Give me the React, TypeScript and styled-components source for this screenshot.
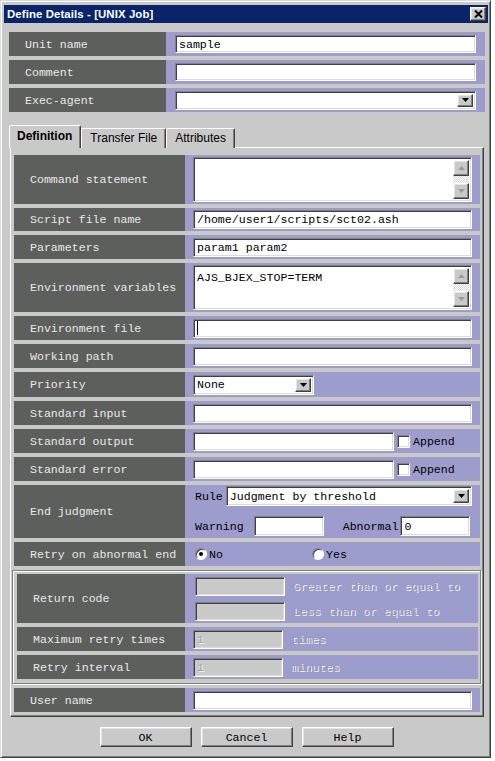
import React from "react";
import styled, { createGlobalStyle, css } from "styled-components";

const GRAY = "#c9c9c9";
const PURPLE = "#9c9ccd";
const LABEL = "#5d5f5c";
const MONO = `"Liberation Mono", "Courier New", monospace`;
const SANS = `"Liberation Sans", Arial, sans-serif`;

const GlobalStyle = createGlobalStyle`
  html, body { margin: 0; padding: 0; background: #ffffff; }
  body { width: 495px; height: 761px; overflow: hidden; }
  *, *::before, *::after { box-sizing: border-box; }
`;

const sunken = css`
  border-style: solid;
  border-width: 1px;
  border-color: #808080 #ffffff #ffffff #808080;
  box-shadow: inset 1px 1px 0 #404040, inset -1px -1px 0 #dcdcdc;
`;

const raised = css`
  border-style: solid;
  border-width: 1px;
  border-color: #ffffff #404040 #404040 #ffffff;
  box-shadow: inset -1px -1px 0 #808080, inset 1px 1px 0 #e4e4e4;
`;

const Window = styled.div`
  width: 491px;
  height: 758px;
  background: ${GRAY};
  border: 1px solid;
  border-color: #dcdcdc #404040 #404040 #dcdcdc;
  box-shadow: inset 1px 1px 0 #ffffff, inset -1px -1px 0 #808080;
  padding: 4px 2px 2px 3px;
  display: flex;
  flex-direction: column;
`;

const TitleBar = styled.div`
  height: 18px;
  background: #0a246a;
  display: flex;
  align-items: center;
  justify-content: space-between;
  padding: 0 2px 0 3px;
`;

const TitleText = styled.span`
  color: #ffffff;
  font: bold 11.4px ${SANS};
  letter-spacing: 0.1px;
`;

const CloseButton = styled.div`
  width: 16px;
  height: 14px;
  background: ${GRAY};
  ${raised};
  display: flex;
  align-items: center;
  justify-content: center;
`;

const TopRows = styled.div`
  display: flex;
  flex-direction: column;
  gap: 4px;
  margin: 9px 3px 0 5px;
`;

const Row = styled.div<{ $label: number; $h: number }>`
  display: grid;
  grid-template-columns: ${(p) => p.$label}px 1fr;
  height: ${(p) => p.$h}px;
`;

const Label = styled.div`
  background: ${LABEL};
  color: #e8e8e8;
  font: 11.6px ${MONO};
  display: flex;
  align-items: center;
  padding-left: 16px;
  white-space: pre;
`;

const Field = styled.div<{ $pad: number }>`
  background: ${PURPLE};
  display: flex;
  align-items: center;
  padding: 0 ${(p) => p.$pad}px;
  min-width: 0;
`;

const FieldStack = styled.div<{ $gap: number; $top: number }>`
  background: ${PURPLE};
  display: flex;
  flex-direction: column;
  gap: ${(p) => p.$gap}px;
  padding: ${(p) => p.$top}px 8px 0 10px;
`;

const Line = styled.div`
  display: flex;
  align-items: center;
`;

const Input = styled.div<{ $h?: number; $w?: number; $disabled?: boolean }>`
  ${sunken};
  height: ${(p) => p.$h ?? 19}px;
  ${(p) => (p.$w ? `width: ${p.$w}px; flex: none;` : "flex: 1;")}
  background: ${(p) => (p.$disabled ? GRAY : "#ffffff")};
  color: ${(p) => (p.$disabled ? "#a4a4a4" : "#000000")};
  ${(p) => (p.$disabled ? "text-shadow: 1px 1px 0 #f4f4f4;" : "")}
  font: 11.6px ${MONO};
  display: flex;
  align-items: center;
  padding-left: 3px;
  white-space: pre;
  overflow: hidden;
`;

const Caret = styled.span`
  width: 1px;
  height: 14px;
  background: #000;
`;

const SelectBox = styled.div<{ $h?: number; $w?: number }>`
  ${sunken};
  height: ${(p) => p.$h ?? 20}px;
  ${(p) => (p.$w ? `width: ${p.$w}px; flex: none;` : "flex: 1;")}
  background: #ffffff;
  display: flex;
  align-items: center;
  padding: 2px;
`;

const SelectText = styled.span`
  flex: 1;
  font: 11.6px ${MONO};
  color: #000;
  padding-left: 1px;
  white-space: pre;
`;

const ArrowButton = styled.div`
  width: 16px;
  height: 100%;
  background: ${GRAY};
  ${raised};
  display: flex;
  align-items: center;
  justify-content: center;
`;

const TextArea = styled.div`
  ${sunken};
  flex: 1;
  height: 45px;
  background: #ffffff;
  display: flex;
  padding: 2px;
`;

const AreaText = styled.div`
  flex: 1;
  font: 11.6px ${MONO};
  line-height: 14px;
  color: #000;
  padding: 3px 1px;
  white-space: pre;
`;

const ScrollBar = styled.div`
  width: 16px;
  display: flex;
  flex-direction: column;
  background: repeating-conic-gradient(#ffffff 0 25%, #d8d8d8 0 50%) 0 0 / 2px 2px;
`;

const ScrollButton = styled.div`
  width: 16px;
  height: 16px;
  background: ${GRAY};
  ${raised};
  display: flex;
  align-items: center;
  justify-content: center;
`;

const ScrollTrack = styled.div`
  flex: 1;
`;

const Check = styled.span`
  width: 13px;
  height: 13px;
  flex: none;
  background: #fff;
  ${sunken};
  margin-left: 3px;
`;

const Text = styled.span<{ $ml?: number; $mr?: number }>`
  font: 11.6px ${MONO};
  color: #000;
  white-space: pre;
  margin-left: ${(p) => p.$ml ?? 0}px;
  margin-right: ${(p) => p.$mr ?? 0}px;
`;

const DimText = styled.span`
  font: 11.6px ${MONO};
  color: #9a9ab2;
  text-shadow: 1px 1px 0 #f6f6f6;
  white-space: pre;
  margin-left: 8px;
`;

const RadioOption = styled.div<{ $w?: number }>`
  display: flex;
  align-items: center;
  gap: 2px;
  ${(p) => (p.$w ? `width: ${p.$w}px;` : "")}
`;

const Radio = styled.span<{ $checked?: boolean }>`
  width: 12px;
  height: 12px;
  border-radius: 50%;
  background: #fff;
  border: 1px solid;
  border-color: #808080 #ffffff #ffffff #808080;
  box-shadow: inset 1px 1px 0 #404040;
  display: inline-flex;
  align-items: center;
  justify-content: center;
  &::after {
    content: "";
    width: 4px;
    height: 4px;
    border-radius: 50%;
    background: ${(p) => (p.$checked ? "#000" : "transparent")};
  }
`;

const TabStrip = styled.div`
  display: flex;
  align-items: flex-end;
  height: 23px;
  margin: 13px 0 -1px 5px;
`;

const Tab = styled.div<{ $active?: boolean }>`
  position: relative;
  z-index: ${(p) => (p.$active ? 1 : 0)};
  height: ${(p) => (p.$active ? 23 : 20)}px;
  background: ${GRAY};
  border-top: 1px solid #ffffff;
  border-left: 1px solid #ffffff;
  border-right: 1px solid #404040;
  border-radius: 2px 2px 0 0;
  box-shadow: inset -1px 0 0 #808080;
  padding: ${(p) => (p.$active ? "0 8px 2px 7px" : "0 8px 1px 8px")};
  display: flex;
  align-items: center;
  font: ${(p) => (p.$active ? "bold" : "normal")} 12px ${SANS};
  color: #000;
  white-space: pre;
`;

const Panel = styled.div`
  margin: 0 4px 0 6px;
  border: 1px solid;
  border-color: #ffffff #404040 #404040 #ffffff;
  box-shadow: inset -1px -1px 0 #808080;
  padding: 7px 3px 4px 3px;
  display: flex;
  flex-direction: column;
  gap: 4px;
`;

const Group = styled.div`
  height: 114px;
  margin: 0 -1px 0 -2px;
  border: 1px solid #808080;
  box-shadow: inset 1px 1px 0 #ffffff, 1px 1px 0 #ffffff;
  padding: 3px 2px 4px 4px;
  display: flex;
  flex-direction: column;
  gap: 4px;
`;

const ButtonBar = styled.div`
  display: flex;
  justify-content: center;
  gap: 9px;
  margin-top: 10px;
  padding-left: 1px;
`;

const DialogButton = styled.div`
  width: 92px;
  height: 20px;
  background: ${GRAY};
  ${raised};
  display: flex;
  align-items: center;
  justify-content: center;
  font: 11.6px ${MONO};
  color: #000;
`;

const Triangle = ({ up, color = "#000" }: { up?: boolean; color?: string }) => (
  <svg width="7" height="4" viewBox="0 0 7 4">
    <polygon points={up ? "0,4 7,4 3.5,0" : "0,0 7,0 3.5,4"} fill={color} />
  </svg>
);

const Select = ({ text, w, h }: { text: string; w?: number; h?: number }) => (
  <SelectBox $w={w} $h={h}>
    <SelectText>{text}</SelectText>
    <ArrowButton>
      <Triangle />
    </ArrowButton>
  </SelectBox>
);

const Area = ({ text }: { text: string }) => (
  <TextArea>
    <AreaText>{text}</AreaText>
    <ScrollBar>
      <ScrollButton>
        <Triangle up color="#9a9a9a" />
      </ScrollButton>
      <ScrollTrack />
      <ScrollButton>
        <Triangle color="#9a9a9a" />
      </ScrollButton>
    </ScrollBar>
  </TextArea>
);

const PL = 171;
const GL = 168;

export default function App() {
  return (
    <>
      <GlobalStyle />
      <Window>
        <TitleBar>
          <TitleText>Define Details - [UNIX Job]</TitleText>
          <CloseButton>
            <svg width="9" height="8" viewBox="0 0 9 8">
              <path d="M1 0.5 L8 7.5 M8 0.5 L1 7.5" stroke="#000" strokeWidth="2" />
            </svg>
          </CloseButton>
        </TitleBar>

        <TopRows>
          <Row $label={157} $h={24}>
            <Label>Unit name</Label>
            <Field $pad={9}>
              <Input $h={18}>sample</Input>
            </Field>
          </Row>
          <Row $label={157} $h={24}>
            <Label>Comment</Label>
            <Field $pad={9}>
              <Input $h={18} />
            </Field>
          </Row>
          <Row $label={157} $h={24}>
            <Label>Exec-agent</Label>
            <Field $pad={9}>
              <Select text="" h={19} />
            </Field>
          </Row>
        </TopRows>

        <TabStrip>
          <Tab $active>Definition</Tab>
          <Tab>Transfer File</Tab>
          <Tab>Attributes</Tab>
        </TabStrip>

        <Panel>
          <Row $label={PL} $h={49}>
            <Label>Command statement</Label>
            <Field $pad={8}>
              <Area text="" />
            </Field>
          </Row>
          <Row $label={PL} $h={23}>
            <Label>Script file name</Label>
            <Field $pad={8}>
              <Input>/home/user1/scripts/sct02.ash</Input>
            </Field>
          </Row>
          <Row $label={PL} $h={24}>
            <Label>Parameters</Label>
            <Field $pad={8}>
              <Input>param1 param2</Input>
            </Field>
          </Row>
          <Row $label={PL} $h={49}>
            <Label>Environment variables</Label>
            <Field $pad={8}>
              <Area text="AJS_BJEX_STOP=TERM" />
            </Field>
          </Row>
          <Row $label={PL} $h={24}>
            <Label>Environment file</Label>
            <Field $pad={8}>
              <Input>
                <Caret />
              </Input>
            </Field>
          </Row>
          <Row $label={PL} $h={24}>
            <Label>Working path</Label>
            <Field $pad={8}>
              <Input />
            </Field>
          </Row>
          <Row $label={PL} $h={25}>
            <Label>Priority</Label>
            <Field $pad={8}>
              <Select text="None" w={121} />
            </Field>
          </Row>
          <Row $label={PL} $h={24}>
            <Label>Standard input</Label>
            <Field $pad={8}>
              <Input />
            </Field>
          </Row>
          <Row $label={PL} $h={24}>
            <Label>Standard output</Label>
            <Field $pad={8}>
              <Input $w={201} />
              <Check />
              <Text $ml={3}>Append</Text>
            </Field>
          </Row>
          <Row $label={PL} $h={24}>
            <Label>Standard error</Label>
            <Field $pad={8}>
              <Input $w={201} />
              <Check />
              <Text $ml={3}>Append</Text>
            </Field>
          </Row>
          <Row $label={PL} $h={53}>
            <Label>End judgment</Label>
            <FieldStack $gap={10} $top={1}>
              <Line>
                <Text $mr={3}>Rule</Text>
                <Select text="Judgment by threshold" />
              </Line>
              <Line>
                <Text $mr={10}>Warning</Text>
                <Input $w={70} $h={20} />
                <Text $ml={19} $mr={2}>Abnormal</Text>
                <Input $w={70} $h={20}>0</Input>
              </Line>
            </FieldStack>
          </Row>
          <Row $label={PL} $h={24}>
            <Label>Retry on abnormal end</Label>
            <Field $pad={10}>
              <RadioOption $w={117}>
                <Radio $checked />
                <Text>No</Text>
              </RadioOption>
              <RadioOption>
                <Radio />
                <Text>Yes</Text>
              </RadioOption>
            </Field>
          </Row>

          <Group>
            <Row $label={GL} $h={49}>
              <Label>Return code</Label>
              <FieldStack $gap={6} $top={3}>
                <Line>
                  <Input $w={90} $disabled />
                  <DimText>Greater than or equal to</DimText>
                </Line>
                <Line>
                  <Input $w={90} $disabled />
                  <DimText>Less than or equal to</DimText>
                </Line>
              </FieldStack>
            </Row>
            <Row $label={GL} $h={24}>
              <Label>Maximum retry times</Label>
              <Field $pad={8}>
                <Input $w={90} $disabled>1</Input>
                <DimText>times</DimText>
              </Field>
            </Row>
            <Row $label={GL} $h={24}>
              <Label>Retry interval</Label>
              <Field $pad={8}>
                <Input $w={90} $disabled>1</Input>
                <DimText>minutes</DimText>
              </Field>
            </Row>
          </Group>

          <Row $label={PL} $h={24}>
            <Label>User name</Label>
            <Field $pad={8}>
              <Input />
            </Field>
          </Row>
        </Panel>

        <ButtonBar>
          <DialogButton>OK</DialogButton>
          <DialogButton>Cancel</DialogButton>
          <DialogButton>Help</DialogButton>
        </ButtonBar>
      </Window>
    </>
  );
}
